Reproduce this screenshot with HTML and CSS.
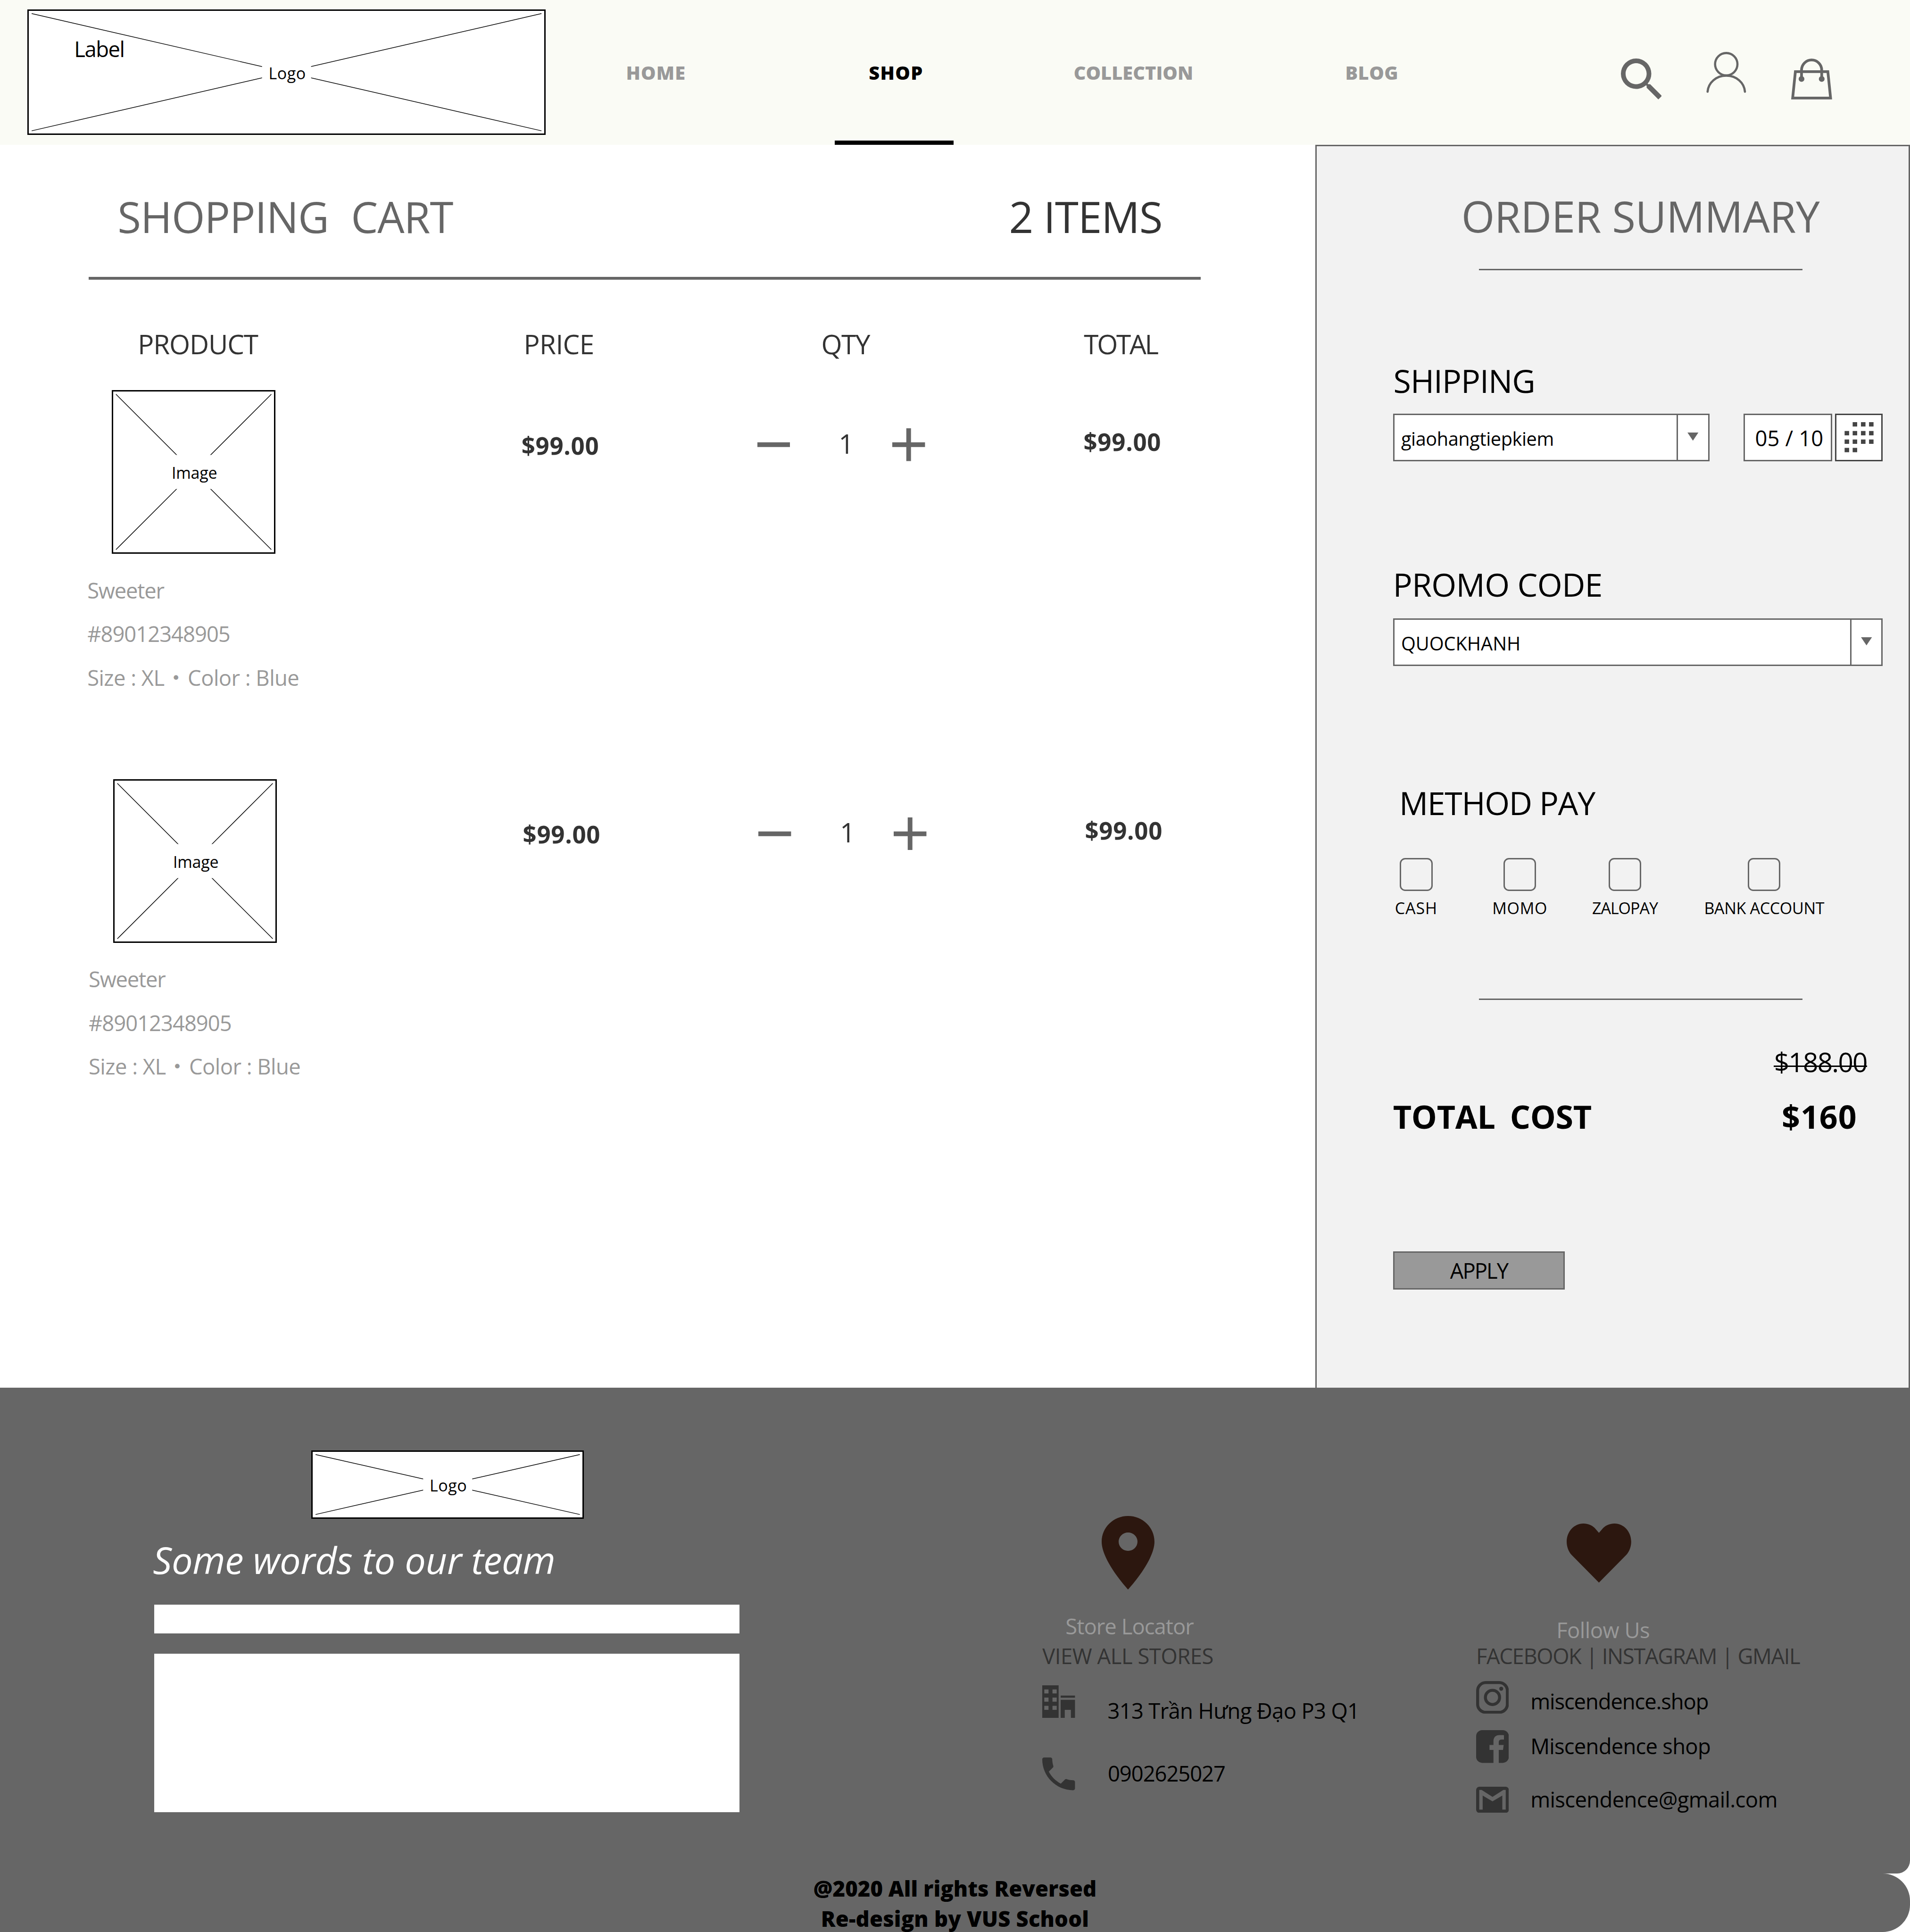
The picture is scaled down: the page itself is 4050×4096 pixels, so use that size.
FILE: index.html
```html
<!DOCTYPE html>
<html lang="en">
<head>
<meta charset="utf-8">
<title>Shopping Cart</title>
<link rel="stylesheet" href="styles.css">
</head>
<body>
<header class="header">
  <div class="placeholder logo-main">
    <svg class="cross" viewBox="0 0 378 90"><path d="M2 2L376 88M376 2L2 88"/><rect x="171" y="32.5" width="36" height="25"/></svg>
    <span class="caption logo-text">Logo</span>
    <span class="label">Label</span>
  </div>
  <nav class="nav">
    <a class="nav-item home">HOME</a>
    <a class="nav-item shop active">SHOP</a>
    <a class="nav-item collection">COLLECTION</a>
    <a class="nav-item blog">BLOG</a>
  </nav>
  <div class="actions">
    <svg class="icon-action" viewBox="3 3 17.49 17.49"><path fill="#666" d="M15.5 14h-.79l-.28-.27A6.471 6.471 0 0 0 16 9.5 6.5 6.5 0 1 0 9.5 16c1.61 0 3.09-.59 4.23-1.57l.27.28v.79l5 4.99L20.49 19l-4.99-5zm-6 0C7.01 14 5 11.99 5 9.5S7.01 5 9.5 5 14 7.01 14 9.5 11.99 14 9.5 14z"/></svg>
    <svg class="icon-action user" viewBox="0 0 30 30"><g fill="none" stroke="#666" stroke-width="1.6" stroke-linecap="round"><circle cx="15" cy="9" r="8.2"/><path d="M1.3 29.2C1.8 22.5 7.6 17.4 15 17.4S28.2 22.5 28.7 29.2"/></g></svg>
    <svg class="icon-action" viewBox="0 0 30 30"><g fill="none" stroke="#666" stroke-width="2"><path d="M3.1 9.6H26.9L28.9 29H1.1Z"/><path d="M7.6 15V8.5a7.4 7.4 0 0 1 14.8 0V15"/></g><g fill="#666"><circle cx="7.6" cy="15" r="2.1"/><circle cx="22.4" cy="15" r="2.1"/></g></svg>
  </div>
</header>

<main class="main">
  <section class="cart">
    <div class="cart-head">
      <h1 class="title cart-title">SHOPPING&nbsp; CART</h1>
      <span class="title cart-count">2 ITEMS</span>
    </div>
    <div class="cart-rule"></div>
    <div class="grid columns">
      <span class="th th-product">PRODUCT</span>
      <span class="th th-price">PRICE</span>
      <span class="th th-qty">QTY</span>
      <span class="th th-total">TOTAL</span>
    </div>
    <article class="grid row">
      <div class="product">
        <div class="placeholder thumb">
          <svg class="cross" viewBox="0 0 118 118"><path d="M2 2L116 116M116 2L2 116"/><rect x="41" y="46.5" width="36" height="25"/></svg>
          <span class="caption image-text">Image</span>
        </div>
        <p class="detail name">Sweeter</p>
        <p class="detail sku">#89012348905</p>
        <p class="detail variant">Size : XL<span class="dot">・</span>Color : Blue</p>
      </div>
      <div class="money price">$99.00</div>
      <div class="qty">
        <svg class="step" viewBox="5 5 14 14"><path d="M19 13H5v-2h14z"/></svg>
        <span class="count">1</span>
        <svg class="step" viewBox="5 5 14 14"><path d="M19 13h-6v6h-2v-6H5v-2h6V5h2v6h6z"/></svg>
      </div>
      <div class="money total">$99.00</div>
    </article>
    <article class="grid row second">
      <div class="product">
        <div class="placeholder thumb">
          <svg class="cross" viewBox="0 0 118 118"><path d="M2 2L116 116M116 2L2 116"/><rect x="41" y="46.5" width="36" height="25"/></svg>
          <span class="caption image-text">Image</span>
        </div>
        <p class="detail name">Sweeter</p>
        <p class="detail sku">#89012348905</p>
        <p class="detail variant">Size : XL<span class="dot">・</span>Color : Blue</p>
      </div>
      <div class="money price">$99.00</div>
      <div class="qty">
        <svg class="step" viewBox="5 5 14 14"><path d="M19 13H5v-2h14z"/></svg>
        <span class="count">1</span>
        <svg class="step" viewBox="5 5 14 14"><path d="M19 13h-6v6h-2v-6H5v-2h6V5h2v6h6z"/></svg>
      </div>
      <div class="money total">$99.00</div>
    </article>
  </section>

  <aside class="summary">
    <h2 class="title summary-title">ORDER SUMMARY</h2>
    <div class="summary-rule"></div>

    <h3 class="heading shipping">SHIPPING</h3>
    <div class="fields">
      <div class="select carrier">
        <span class="select-value carrier-value">giaohangtiepkiem</span>
        <span class="select-arrow"><svg viewBox="0 0 8 6"><path d="M0 0h8L4 6z"/></svg></span>
      </div>
      <div class="date">05 / 10</div>
      <div class="calendar">
        <svg viewBox="0 0 33 33"><path d="M11.9 5.2h3.3v3.2h-3.3zM18 5.2h3.3v3.2H18zM23.9 5.2h3.3v3.2h-3.3zM6 11.7h3.3v3.2H6zM11.9 11.7h3.3v3.2h-3.3zM18 11.7h3.3v3.2H18zM23.9 11.7h3.3v3.2h-3.3zM6 17.9h3.3v3.2H6zM11.9 17.9h3.3v3.2h-3.3zM18 17.9h3.3v3.2H18zM23.9 17.9h3.3v3.2h-3.3zM6 24h3.3v3.2H6zM11.9 24h3.3v3.2h-3.3z"/></svg>
      </div>
    </div>

    <h3 class="heading promo">PROMO CODE</h3>
    <div class="select promo-select">
      <span class="select-value">QUOCKHANH</span>
      <span class="select-arrow"><svg viewBox="0 0 8 6"><path d="M0 0h8L4 6z"/></svg></span>
    </div>

    <h3 class="heading method">METHOD PAY</h3>
    <div class="methods">
      <div class="option cash"><span class="box"></span><span>CASH</span></div>
      <div class="option momo"><span class="box"></span><span>MOMO</span></div>
      <div class="option zalopay"><span class="box"></span><span>ZALOPAY</span></div>
      <div class="option bank"><span class="box"></span><span>BANK ACCOUNT</span></div>
    </div>
    <div class="summary-rule lower"></div>

    <div class="old-price"><span class="struck">$188.00</span></div>
    <div class="cost">
      <span class="cost-label">TOTAL&nbsp; COST</span>
      <span class="cost-value">$160</span>
    </div>
    <button class="apply">APPLY</button>
  </aside>
</main>

<footer class="footer">
  <div class="footer-top">
    <section class="contact">
      <div class="placeholder logo-small">
        <svg class="cross" viewBox="0 0 198 48"><path d="M2 2L196 46M196 2L2 46"/><rect x="81" y="11.5" width="36" height="25"/></svg>
        <span class="caption logo-text">Logo</span>
      </div>
      <p class="message">Some words to our team</p>
      <div class="input"></div>
      <div class="textarea"></div>
    </section>

    <section class="stores">
      <svg class="pin" viewBox="5 2 14 20" preserveAspectRatio="none"><path d="M12 2C8.13 2 5 5.13 5 9c0 5.25 7 13 7 13s7-7.75 7-13c0-3.87-3.13-7-7-7zm0 9.5a2.5 2.5 0 0 1 0-5 2.5 2.5 0 0 1 0 5z"/></svg>
      <p class="foot-title locator">Store Locator</p>
      <p class="foot-sub view-all">VIEW ALL STORES</p>
      <div class="line address">
        <svg class="glyph" viewBox="0 0 24 24"><path fill-rule="evenodd" d="M0 0H12V24H0ZM1.5 3V6H4.6V3ZM7.5 3V6H10.6V3ZM1.5 9V12H4.6V9ZM7.5 9V12H10.6V9ZM1.5 15V18H4.6V15ZM7.5 15V18H10.6V15ZM13.5 7.5H24V9.1H13.5ZM13.5 10.6H24V24H21V18H16.5V24H13.5Z"/></svg>
        <span>313 Trần Hưng Đạo P3 Q1</span>
      </div>
      <div class="line phone">
        <svg class="glyph" viewBox="3 3 18 18"><path d="M6.62 10.79c1.44 2.83 3.76 5.14 6.59 6.59l2.2-2.2c.27-.27.67-.36 1.02-.24 1.12.37 2.33.57 3.57.57.55 0 1 .45 1 1V20c0 .55-.45 1-1 1-9.39 0-17-7.61-17-17 0-.55.45-1 1-1h3.5c.55 0 1 .45 1 1 0 1.25.2 2.45.57 3.57.11.35.03.74-.25 1.02l-2.2 2.2z"/></svg>
        <span>0902625027</span>
      </div>
    </section>

    <section class="follow">
      <svg class="heart" viewBox="0 0 47.3 43.3"><path d="M23.65 43.3L3.6 23C1.3 20.4 0 17 0 13.3 0 6 5.4 0 12.3 0c3.3 0 6 1.2 8.2 3.2L23.65 6.8 26.8 3.2C29 1.2 31.8 0 35 0c6.9 0 12.3 6 12.3 13.3 0 3.7-1.3 7.1-3.6 9.7Z"/></svg>
      <p class="foot-title follow-us">Follow Us</p>
      <p class="foot-sub networks">FACEBOOK | INSTAGRAM | GMAIL</p>
      <div class="line instagram">
        <svg class="glyph" viewBox="0 0 24 24"><g fill="none" stroke="#333" stroke-width="2.2"><rect x="1.1" y="1.1" width="21.8" height="21.8" rx="6"/><circle cx="12" cy="12" r="5.2"/></g><circle cx="18.4" cy="5.6" r="1.45"/></svg>
        <span>miscendence.shop</span>
      </div>
      <div class="line facebook">
        <svg class="glyph" viewBox="0 0 24 24"><path d="M4.5 0H19.5A4.5 4.5 0 0 1 24 4.5V19.5A4.5 4.5 0 0 1 19.5 24H16.6V14.5H19.7L20.2 10.9H16.6V8.9C16.6 7.9 17 6.9 18.7 6.9H20.4V3.7C19.2 3.6 18.2 3.6 17.2 3.6 14.4 3.6 12.7 5.2 12.7 8.1V10.9H9.8V14.5H12.7V24H4.5A4.5 4.5 0 0 1 0 19.5V4.5A4.5 4.5 0 0 1 4.5 0Z"/></svg>
        <span>Miscendence shop</span>
      </div>
      <div class="line gmail">
        <svg class="glyph mail" viewBox="0 0 24 19.2"><path fill-rule="evenodd" d="M2.4 0H21.6A2.4 2.4 0 0 1 24 2.4V16.8A2.4 2.4 0 0 1 21.6 19.2H2.4A2.4 2.4 0 0 1 0 16.8V2.4A2.4 2.4 0 0 1 2.4 0ZM2.3 2.3V16.8H4.8V6.5L12 10.7 19.2 6.5V16.8H21.7V2.3H20L12 7.4 4 2.3Z"/></svg>
        <span>miscendence@gmail.com</span>
      </div>
    </section>
  </div>
  <div class="footer-bottom">
    <p class="copy">@2020 All rights Reversed</p>
    <p class="copy credit">Re-design by VUS School</p>
  </div>
</footer>
</body>
</html>
```
FILE: styles.css
```css
/* The layout is 1400 units wide; 1rem equals 10 units. */
html { font-size: calc(100vw / 140); }
* { box-sizing: border-box; margin: 0; padding: 0; }
body {
  width: 140rem;
  height: 141.6rem;
  overflow: hidden;
  background: #fff;
  color: #000;
  font-family: "Open Sans", "Noto Sans", "Noto Sans CJK JP", sans-serif;
  font-weight: 400;
}
svg { display: block; flex: none; }
h1, h2, h3 { font-weight: 400; }
span, a, p, h1, h2, h3 { white-space: nowrap; }

/* Placeholders */
.placeholder {
  position: relative;
  display: grid;
  place-items: center;
  background: #fff;
  border: 3px solid #000;
}
.placeholder > .cross, .placeholder > .caption { grid-area: 1 / 1; }
.cross { width: 100%; height: 100%; }
.cross path { stroke: #000; stroke-width: .5; fill: none; }
.cross rect { fill: #fff; }
.caption { font-size: 1.176rem; line-height: 1.6rem; padding-top: .12rem; }
.logo-text { letter-spacing: .015em; padding-left: .12rem; }
.image-text { letter-spacing: -.006em; padding-left: .1rem; }

/* Header */
.header { display: flex; height: 10.6rem; background: #fafbf5; }
.logo-main { width: 38rem; height: 9.2rem; margin: .7rem 0 0 2rem; }
.label {
  position: absolute;
  left: 3.33rem;
  top: 1.8rem;
  font-size: 1.568rem;
  line-height: 2rem;
  letter-spacing: -.032em;
}
.nav { display: grid; grid-template-columns: 16.16rem 19.04rem 15.76rem 19.18rem; }
.nav-item {
  display: flex;
  flex-direction: column;
  align-items: center;
  padding-top: 4.34rem;
  font-size: 1.372rem;
  line-height: 2rem;
  font-weight: 800;
  color: #999;
}
.home { letter-spacing: .029em; }
.shop { letter-spacing: .036em; }
.collection { letter-spacing: .001em; }
.blog { letter-spacing: .012em; }
.active { color: #000; }
.active::after {
  content: "";
  width: 8.7rem;
  height: .3rem;
  margin: 3.96rem .26rem 0 0;
  background: #000;
}
.actions { display: flex; align-items: flex-start; gap: 3.25rem; padding: 4.3rem 0 0 8.66rem; }
.icon-action { width: 3rem; height: 3rem; }
.user { margin-top: -.5rem; }

/* Main */
.main { display: grid; grid-template-columns: 96.4rem 43.6rem; height: 91.1rem; }
.title { font-size: 3.136rem; line-height: 4.4rem; color: #666; }

/* Cart */
.cart { padding: 3.08rem 8.4rem 0 6.5rem; }
.cart-head { display: flex; justify-content: space-between; padding: 0 2.81rem 0 2.12rem; }
.cart-title { letter-spacing: -.0115em; word-spacing: .012em; }
.cart-count { color: #333; letter-spacing: -.012em; }
.cart-rule { height: .2rem; margin-top: 2.22rem; background: #666; }
.grid { display: grid; grid-template-columns: 31.69rem 17.31rem 23.92rem 1fr; align-items: start; }
.columns { margin-top: 3.33rem; }
.th { font-size: 1.96rem; line-height: 2.8rem; color: #333; }
.th-product { padding-left: 3.6rem; letter-spacing: -.02em; }
.th-price { padding-left: .2rem; letter-spacing: -.011em; }
.th-qty { padding-left: 4.7rem; letter-spacing: -.027em; }
.th-total { padding-left: .03rem; letter-spacing: -.058em; }
.row { margin-top: 1.97rem; height: 28.5rem; }
.row.second { margin: 0 -.1rem 0 .1rem; }
.thumb { width: 12rem; height: 12rem; margin: 0 0 1.08rem 1.7rem; }
.detail { margin-left: -.1rem; font-size: 1.568rem; line-height: 3.2rem; color: #999; }
.name { letter-spacing: -.027em; }
.sku { letter-spacing: -.022em; }
.variant { letter-spacing: -.012em; }
.dot { margin: 0 .1rem 0 .06rem; }
.money { font-size: 1.764rem; line-height: 2.4rem; font-weight: 700; letter-spacing: .014em; color: #333; }
.price { padding: 2.85rem 0 0 .03rem; }
.total { padding-top: 2.58rem; }
.qty { display: flex; align-items: center; height: 2.8rem; margin-top: 2.6rem; }
.step { width: 2.4rem; height: 2.4rem; fill: #666; }
.count { margin: -.18rem 2.82rem 0 3.57rem; font-size: 1.96rem; line-height: 2.8rem; color: #333; }

/* Order summary */
.summary {
  padding: 2.96rem 1.9rem 0 5.6rem;
  background: #f2f2f2;
  border: 3px solid #666;
  border-bottom: 0;
}
.summary-title { margin-left: 5.01rem; letter-spacing: -.005em; }
.summary-rule { width: 23.7rem; height: 3px; margin: 1.64rem 0 0 6.3rem; background: #666; }
.heading { font-size: 2.352rem; line-height: 3.2rem; }
.shipping { margin: 6.51rem 0 .79rem .03rem; letter-spacing: -.0145em; }
.fields { display: flex; }
.select { display: flex; height: 3.5rem; background: #fff; border: 3px solid #666; }
.carrier { width: 23.2rem; }
.select-value { flex: 1; padding: .1rem 0 0 .49rem; font-size: 1.372rem; line-height: 3.3rem; }
.carrier-value { letter-spacing: -.01em; }
.select-arrow {
  display: grid;
  place-items: center;
  width: 2.3rem;
  padding-bottom: .1rem;
  border-left: 3px solid #666;
}
.select-arrow svg { width: .81rem; height: .6rem; fill: #666; }
.date {
  width: 6.5rem;
  height: 3.5rem;
  margin: 0 .2rem 0 2.5rem;
  padding: .04rem 0 0 .74rem;
  background: #fff;
  border: 3px solid #666;
  font-size: 1.568rem;
  line-height: 3.3rem;
  letter-spacing: .003em;
  white-space: nowrap;
}
.calendar { width: 3.5rem; height: 3.5rem; background: #fff; border: 3px solid #444; }
.calendar svg { width: 3.3rem; height: 3.3rem; fill: #444; }
.promo { margin: 7.42rem 0 .89rem 0; letter-spacing: -.0095em; }
.method { margin: 8.42rem 0 2.46rem .46rem; letter-spacing: -.02em; }
.methods { display: flex; }
.option {
  display: flex;
  flex-direction: column;
  align-items: center;
  gap: .46rem;
  font-size: 1.176rem;
  line-height: 1.6rem;
}
.box { width: 2.4rem; height: 2.4rem; border: 3px solid #666; border-radius: .4rem; }
.cash { width: 3.4rem; letter-spacing: .028em; }
.momo { width: 6.8rem; margin-left: 2.5rem; letter-spacing: .022em; }
.zalopay { width: 6.8rem; margin-left: .9rem; letter-spacing: -.031em; }
.bank { width: 10.4rem; margin-left: 1.61rem; letter-spacing: -.01em; }
.summary-rule.lower { margin-top: 5.84rem; }
.old-price { display: flex; justify-content: flex-end; margin-top: 3.12rem; padding-right: 1.15rem; }
.struck { position: relative; font-size: 1.96rem; line-height: 2.8rem; letter-spacing: -.031em; }
.struck::after {
  content: "";
  position: absolute;
  left: -.03rem;
  right: 0;
  top: 1.66rem;
  height: 3px;
  background: #000;
}
.cost {
  display: flex;
  justify-content: space-between;
  margin-top: 1.01rem;
  padding-right: 1.88rem;
  font-size: 2.352rem;
  line-height: 3.2rem;
  font-weight: 700;
}
.cost-label { letter-spacing: -.004em; word-spacing: -.028em; }
.cost-value { letter-spacing: .015em; }
.apply {
  display: block;
  width: 12.6rem;
  height: 2.8rem;
  margin-top: 8.27rem;
  background: #999;
  border: 3px solid #666;
  color: #000;
  font-family: inherit;
  font-size: 1.568rem;
  line-height: 2.6rem;
  letter-spacing: -.043em;
}

/* Footer */
.footer { height: 39.9rem; }
.footer-top {
  display: flex;
  height: 35.6rem;
  padding-left: 11.3rem;
  background: #666;
  border-bottom-right-radius: .95rem;
}
.contact { width: 42.9rem; padding-top: 4.6rem; }
.logo-small { width: 20rem; height: 5rem; margin-left: 11.5rem; }
.message {
  margin: 1.2rem 0 1.5rem -.09rem;
  font-size: 2.744rem;
  line-height: 3.6rem;
  font-style: italic;
  letter-spacing: -.0045em;
  color: #fff;
}
.input { height: 2.1rem; background: #fff; }
.textarea { height: 11.6rem; margin-top: 1.5rem; background: #fff; }
.stores { width: 31.8rem; margin-left: 22.2rem; padding-top: 9.4rem; }
.pin { width: 3.87rem; height: 5.39rem; margin-left: 4.35rem; fill: #2c170f; }
.foot-title, .foot-sub { font-size: 1.568rem; line-height: 2rem; }
.foot-title { color: #999; }
.foot-sub { color: #333; }
.locator { margin: 1.7rem 0 .19rem 1.7rem; letter-spacing: -.021em; }
.view-all { letter-spacing: -.01em; }
.line { display: flex; align-items: flex-start; font-size: 1.568rem; line-height: 2rem; }
.glyph { width: 2.4rem; height: 2.4rem; fill: #333; }
.address { margin-top: 1.13rem; gap: 2.38rem; letter-spacing: -.0145em; }
.address span { padding-top: .87rem; }
.phone { margin-top: 2.43rem; gap: 2.4rem; letter-spacing: -.023em; }
.phone span { padding-top: .17rem; }
.follow { padding-top: 9.97rem; }
.heart { width: 4.73rem; height: 4.33rem; margin-left: 6.63rem; fill: #2c170f; }
.follow-us { margin: 2.46rem 0 -.08rem 5.88rem; letter-spacing: -.011em; }
.networks { margin-left: 0; letter-spacing: -.0305em; }
.follow .line { gap: 1.58rem; }
.instagram { margin-top: .82rem; letter-spacing: -.024em; }
.instagram span { padding-top: .48rem; }
.facebook { margin-top: 1.12rem; letter-spacing: -.016em; }
.facebook span { padding-top: .16rem; }
.gmail { margin-top: 1.67rem; letter-spacing: -.0137em; }
.mail { height: 1.92rem; margin-top: .06rem; }
.footer-bottom {
  height: 4.3rem;
  background: #666;
  border-radius: 0 2rem 2rem 0;
  text-align: center;
}
.copy { font-size: 1.568rem; line-height: 2.2rem; font-weight: 800; letter-spacing: .001em; }
.credit { letter-spacing: .004em; }
```
